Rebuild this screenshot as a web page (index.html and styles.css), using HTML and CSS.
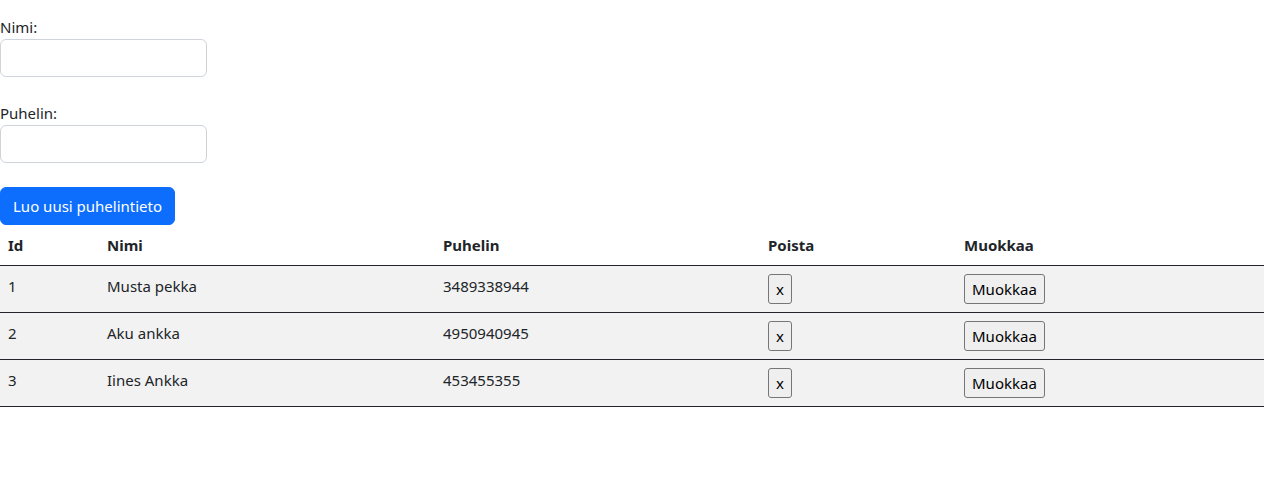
FILE: index.html
```html
<!DOCTYPE html>
<html lang="fi">
<head>
<meta charset="utf-8">
<title>Puhelinluettelo</title>
<link rel="stylesheet" href="styles.css">
</head>
<body>
<div class="app">
  <form class="entry-form">
    <div class="field">
      <label class="field-label" for="nimi">Nimi:</label>
      <input class="field-input" id="nimi" type="text">
    </div>
    <div class="field">
      <label class="field-label" for="puhelin">Puhelin:</label>
      <input class="field-input" id="puhelin" type="text">
    </div>
    <button type="button" class="btn-primary">Luo uusi puhelintieto</button>
  </form>
  <table class="contacts">
    <colgroup>
      <col class="c-id"><col class="c-name"><col class="c-phone"><col class="c-del"><col class="c-edit">
    </colgroup>
    <thead>
      <tr><th>Id</th><th>Nimi</th><th>Puhelin</th><th>Poista</th><th>Muokkaa</th></tr>
    </thead>
    <tbody>
      <tr><td>1</td><td>Musta pekka</td><td>3489338944</td><td><button type="button" class="btn-plain">x</button></td><td><button type="button" class="btn-plain">Muokkaa</button></td></tr>
      <tr><td>2</td><td>Aku ankka</td><td>4950940945</td><td><button type="button" class="btn-plain">x</button></td><td><button type="button" class="btn-plain">Muokkaa</button></td></tr>
      <tr><td>3</td><td>Iines Ankka</td><td>453455355</td><td><button type="button" class="btn-plain">x</button></td><td><button type="button" class="btn-plain">Muokkaa</button></td></tr>
    </tbody>
  </table>
</div>
</body>
</html>
```
FILE: styles.css
```css
* { box-sizing: border-box; }
html, body { margin: 0; padding: 0; background: #fff; }
body {
  font-family: "Noto Sans", "Open Sans", sans-serif;
  font-size: 15px;
  line-height: 24px;
  color: #212529;
}
.app { padding-top: 15px; }
.entry-form { display: flex; flex-direction: column; align-items: flex-start; }
.field { display: flex; flex-direction: column; margin-bottom: 24px; }
.field-label { display: block; height: 24px; }
.field-input {
  width: 207px;
  height: 38px;
  padding: 6px 12px;
  border: 1px solid #ced4da;
  border-radius: 6px;
  font: inherit;
  background: #fff;
}
.btn-primary {
  height: 38px;
  padding: 6px 12px;
  border: 1px solid #0d6efd;
  border-radius: 6px;
  background: #0d6efd;
  color: #fff;
  font: inherit;
}
.contacts {
  width: 100%;
  border-collapse: collapse;
  table-layout: fixed;
}
.c-id { width: 99px; }
.c-name { width: 336px; }
.c-phone { width: 325px; }
.c-del { width: 196px; }
.c-edit { width: 308px; }
.contacts th, .contacts td {
  padding: 8px;
  text-align: left;
  vertical-align: top;
  border-bottom: 1px solid #212529;
}
.contacts th { font-weight: 700; }
.contacts tbody td { background: #f2f2f2; height: 47px; }
.btn-plain {
  height: 30px;
  padding: 2px 7px;
  border: 1px solid #767676;
  border-radius: 3px;
  background: #efefef;
  color: #000;
  font: inherit;
  line-height: 24px;
}
```
